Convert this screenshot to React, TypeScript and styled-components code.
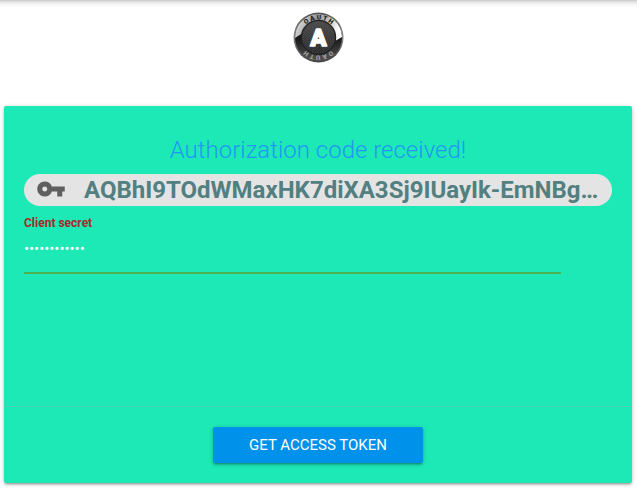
import { useState } from "react";
import styled, { createGlobalStyle } from "styled-components";
import { MdVpnKey } from "react-icons/md";

const GlobalStyle = createGlobalStyle`
  * { box-sizing: border-box; }
  body {
    margin: 0;
    background: #fff;
    font-family: Roboto, "Liberation Sans", sans-serif;
    font-size: 15px;
  }
`;

const Header = styled.header`
  display: flex;
  justify-content: center;
  height: 98px;
  padding-top: 12px;
  background: linear-gradient(#c8c8c8, #e6e6e6 2px, #f8f8f8 5px, #fff 8px);
`;

const Card = styled.form`
  margin: 8px 5px 8px 4px;
  background: #1de9b6;
  border-radius: 2px;
  box-shadow: 0 2px 2px rgba(0, 0, 0, 0.14), 0 3px 1px -2px rgba(0, 0, 0, 0.12),
    0 1px 5px rgba(0, 0, 0, 0.2);
`;

const CardContent = styled.div`
  min-height: 300px;
  padding: 28px 20px 20px;
`;

const Title = styled.h1`
  margin: 0 0 8px;
  color: #2196f3;
  font-size: 24px;
  font-weight: 300;
  line-height: 32px;
  text-align: center;
`;

const Chip = styled.div`
  display: flex;
  align-items: flex-start;
  gap: 18px;
  height: 32px;
  padding: 0 12px;
  border-radius: 16px;
  background: #e4e4e4;
  color: #5f5f5f;
`;

const KeyIcon = styled(MdVpnKey)`
  flex: none;
  width: 30px;
  height: 30px;
`;

const Code = styled.span`
  min-width: 0;
  overflow: hidden;
  color: #527f7f;
  font-size: 24px;
  font-weight: 700;
  line-height: 32px;
  text-overflow: ellipsis;
  white-space: nowrap;
`;

const Field = styled.div`
  display: flex;
  flex-direction: column;
  margin: 8px 51px 0 0;
`;

const Label = styled.label`
  color: #a52a2a;
  font-size: 12px;
  font-weight: 700;
  line-height: 18px;
`;

const SecretInput = styled.input`
  width: 100%;
  height: 42px;
  padding: 0 0 6px;
  border: 0;
  border-bottom: 2px solid #4caf50;
  border-radius: 0;
  outline: 0;
  background: transparent;
  color: #fff;
  font: inherit;
`;

const CardAction = styled.div`
  display: flex;
  justify-content: center;
  padding: 20px;
  border-top: 1px solid rgba(160, 160, 160, 0.3);
`;

const Button = styled.button`
  height: 36px;
  padding: 0 36px;
  border: 0;
  border-radius: 2px;
  background: #0091ea;
  box-shadow: 0 2px 2px rgba(0, 0, 0, 0.14), 0 3px 1px -2px rgba(0, 0, 0, 0.12),
    0 1px 5px rgba(0, 0, 0, 0.2);
  color: #fff;
  font: inherit;
  line-height: 36px;
  text-transform: uppercase;
  cursor: pointer;
`;

function OAuthLogo() {
  return (
    <svg width="51" height="51" viewBox="0 0 102 102" role="img" aria-label="OAuth">
      <defs>
        <linearGradient id="rim" x1="0" y1="0" x2="0" y2="1">
          <stop offset="0" stopColor="#555" />
          <stop offset="0.45" stopColor="#888" />
          <stop offset="1" stopColor="#444" />
        </linearGradient>
        <linearGradient id="shine" x1="0" y1="0" x2="1" y2="0.3">
          <stop offset="0" stopColor="#fafafa" />
          <stop offset="0.45" stopColor="#999" />
          <stop offset="0.75" stopColor="#c4c4c4" />
          <stop offset="1" stopColor="#fff" />
        </linearGradient>
        <linearGradient id="lower" x1="0" y1="0" x2="0" y2="1">
          <stop offset="0.5" stopColor="#161616" />
          <stop offset="1" stopColor="#555" />
        </linearGradient>
        <linearGradient id="face" x1="0" y1="0" x2="0" y2="1">
          <stop offset="0" stopColor="#4a4a4a" />
          <stop offset="1" stopColor="#1b1b1b" />
        </linearGradient>
        <pattern id="weave" width="5" height="5" patternUnits="userSpaceOnUse">
          <path d="M0 0L5 5M5 0L0 5" stroke="#555" strokeWidth="1" />
        </pattern>
        <path id="topArc" d="M15 51A36 36 0 0 1 87 51" />
        <path id="bottomArc" d="M87 51A36 36 0 0 1 15 51" />
      </defs>
      <circle cx="51" cy="51" r="50" fill="url(#rim)" />
      <circle cx="51" cy="51" r="47" fill="url(#lower)" />
      <path d="M4 52A47 47 0 0 1 98 50L84 58L51 51L18 43Z" fill="url(#shine)" />
      <circle cx="51" cy="51" r="34" fill="url(#face)" stroke="#222" strokeWidth="3" />
      <circle cx="51" cy="51" r="33" fill="url(#weave)" />
      <g fontFamily="Roboto, sans-serif" fontWeight="900" textAnchor="middle">
        <text fontSize="13" fill="#1a1a1a">
          <textPath href="#topArc" startOffset="50%">O A U T H</textPath>
        </text>
        <text fontSize="13" fill="#a0a0a0">
          <textPath href="#bottomArc" startOffset="50%">O A U T H</textPath>
        </text>
        <text
          x="51"
          y="68"
          fontSize="48"
          fill="#fff"
          stroke="#fff"
          strokeWidth="3"
          strokeLinejoin="round"
        >
          A
        </text>
      </g>
    </svg>
  );
}

export default function App() {
  const [secret, setSecret] = useState("clientsecret");
  return (
    <>
      <GlobalStyle />
      <Header>
        <OAuthLogo />
      </Header>
      <Card onSubmit={(event) => event.preventDefault()}>
        <CardContent>
          <Title>Authorization code received!</Title>
          <Chip>
            <KeyIcon aria-hidden="true" />
            <Code>AQBhI9TOdWMaxHK7diXA3Sj9IUayIk-EmNBg…</Code>
          </Chip>
          <Field>
            <Label htmlFor="secret">Client secret</Label>
            <SecretInput
              id="secret"
              type="password"
              value={secret}
              onChange={(event) => setSecret(event.target.value)}
            />
          </Field>
        </CardContent>
        <CardAction>
          <Button type="submit">Get access token</Button>
        </CardAction>
      </Card>
    </>
  );
}
